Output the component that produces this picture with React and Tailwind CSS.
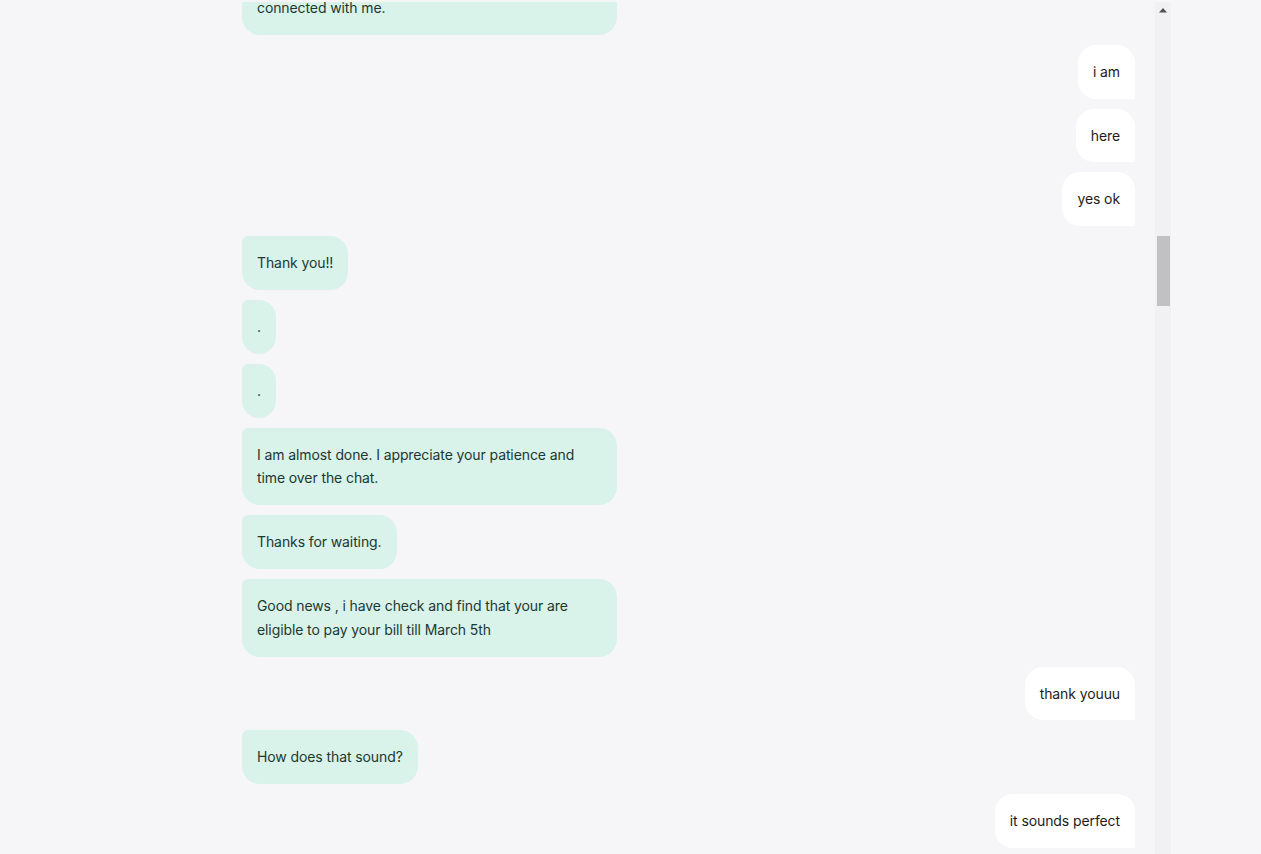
import React, { useLayoutEffect, useRef } from "react";

// earlier part of the conversation (scrolled out of view above)
const earlier = [
  { from: "bot", text: "Hi! Welcome to Bright Energy support. How can I help you today?" },
  { from: "user", text: "hi" },
  { from: "user", text: "i have a question about my bill" },
  { from: "bot", text: "Sure, I can help you with that." },
  { from: "bot", text: "Could you please share your account number?" },
  { from: "user", text: "ok one sec" },
  { from: "user", text: "its 4581 2297 06" },
  { from: "bot", text: "Thank you. Let me pull up your account." },
  { from: "bot", text: "Please give me a moment." },
  { from: "user", text: "ok" },
  { from: "bot", text: "I can see your account now." },
  { from: "bot", text: "Your current balance is $182.40 and it is due on February 25th." },
  { from: "user", text: "can i pay later" },
  { from: "user", text: "i get paid in march" },
  { from: "bot", text: "I understand. Let me check the options available for you." },
  { from: "user", text: "thanks" },
  { from: "bot", text: "Can you confirm the name on the account?" },
  { from: "user", text: "Maria Lopez" },
  { from: "bot", text: "And the service address please?" },
  { from: "user", text: "221 Oak Street" },
  { from: "bot", text: "Perfect, thank you." },
  { from: "bot", text: "I see you have paid on time for the last 12 months." },
  { from: "user", text: "yes" },
  { from: "bot", text: "That helps a lot." },
  { from: "user", text: "ok good" },
  { from: "bot", text: "Let me check with my billing team about an extension." },
  { from: "user", text: "sure" },
  { from: "bot", text: "Are you still with me?" },
  {
    from: "bot",
    text: "Thank you for your patience while I look into this for you. Please stay on the line and keep the chat\nconnected with me.",
  },
];

const current = [
  { from: "user", text: "i am", anchor: true },
  { from: "user", text: "here" },
  { from: "user", text: "yes ok" },
  { from: "bot", text: "Thank you!!" },
  { from: "bot", text: "." },
  { from: "bot", text: "." },
  { from: "bot", text: "I am almost done. I appreciate your patience and time over the chat." },
  { from: "bot", text: "Thanks for waiting." },
  { from: "bot", text: "Good news , i have check and find that your are eligible to pay your bill till March 5th" },
  { from: "user", text: "thank youuu" },
  { from: "bot", text: "How does that sound?" },
  { from: "user", text: "it sounds perfect" },
];

const later = [
  { from: "bot", text: "Wonderful! I have updated the due date on your account." },
  { from: "user", text: "great" },
  { from: "bot", text: "You will receive a confirmation email shortly." },
  { from: "user", text: "ok" },
  { from: "bot", text: "Is there anything else I can help you with today?" },
  { from: "user", text: "no thats all" },
  { from: "bot", text: "Thank you for contacting us." },
  { from: "bot", text: "Have a great day!" },
  { from: "user", text: "you too" },
  { from: "user", text: "bye" },
];

const Bubble = ({ msg, innerRef }) => {
  if (msg.from === "user") {
    return (
      <div ref={innerRef} className="flex justify-end">
        <div className="whitespace-pre-line rounded-[18px] rounded-br-none bg-white px-[15px] py-[15px] text-[14px] leading-[1.7] tracking-[-0.1px] text-[#1c1c1c]">
          {msg.text}
        </div>
      </div>
    );
  }
  return (
    <div ref={innerRef} className="flex justify-start">
      <div className="max-w-[375px] whitespace-pre-line rounded-[18px] rounded-tl-[6px] bg-[#d9f2ea] px-[15px] py-[15px] text-[14px] leading-[1.7] tracking-[-0.1px] text-[#1b3932]">
        {msg.text}
      </div>
    </div>
  );
};

const Arrow = ({ down }) => (
  <svg width="8" height="5" viewBox="0 0 8 5" className={down ? "rotate-180" : ""}>
    <polygon points="4,0 8,4.5 0,4.5" fill="#505050" />
  </svg>
);

export default function App() {
  const boxRef = useRef(null);
  const anchorRef = useRef(null);

  useLayoutEffect(() => {
    if (boxRef.current && anchorRef.current) {
      boxRef.current.scrollTop = anchorRef.current.offsetTop - 43;
    }
  }, []);

  const all = [...earlier, ...current, ...later];

  return (
    <div
      className="h-screen overflow-hidden bg-[#f6f6f8] pt-[2px]"
      style={{ fontFamily: "Inter, 'Noto Sans', sans-serif" }}
    >
      <div className="ml-[222px] flex h-[863px] w-[949px]">
        <div
          ref={boxRef}
          className="relative h-full flex-1 overflow-y-scroll px-5 py-5 [scrollbar-width:none]"
        >
          <div className="flex flex-col gap-[10px]">
            {all.map((m, i) => (
              <Bubble key={i} msg={m} innerRef={m.anchor ? anchorRef : undefined} />
            ))}
          </div>
        </div>

        {/* scrollbar */}
        <div className="flex h-full w-[16px] flex-col bg-[#f1f1f1]">
          <div className="flex h-[17px] items-center justify-center">
            <Arrow />
          </div>
          <div className="flex-1">
            <div className="ml-[2px] mt-[217px] h-[70px] w-[13px] bg-[#c1c1c1]" />
          </div>
          <div className="flex h-[17px] items-center justify-center">
            <Arrow down />
          </div>
        </div>
      </div>
    </div>
  );
}
